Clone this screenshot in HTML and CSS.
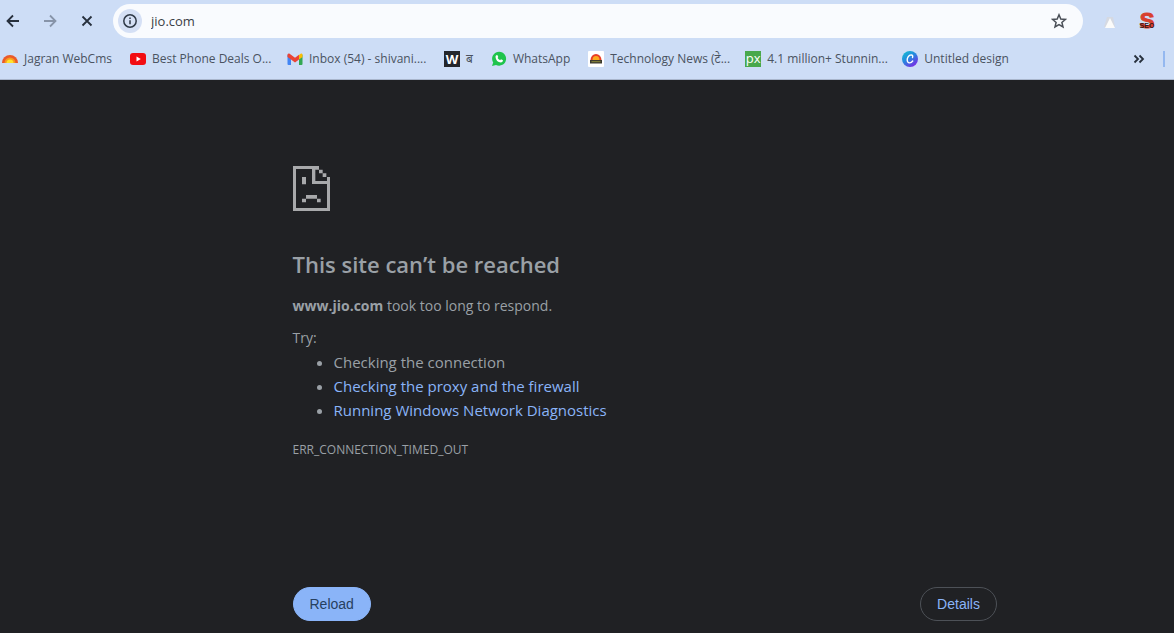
FILE: index.html
```html
<!DOCTYPE html>
<html lang="en">
<head>
    <meta charset="UTF-8">
    <meta name="viewport" content="width=device-width, initial-scale=1.0">
    <title>jio.com</title>
    <link rel="stylesheet" href="styles.css">
</head>
<body>
    <header class="browser">
        <!-- Navigation buttons, address bar and extensions -->
        <div class="toolbar">
            <div class="nav-buttons">
                <button type="button" class="icon-button" aria-label="Back">
                    <svg width="14" height="14" viewBox="0 0 14 14"><path d="M13 7H2M7 1.500L1.500 7L7 12.500" class="line"/></svg>
                </button>
                <button type="button" class="icon-button disabled" aria-label="Forward">
                    <svg width="14" height="14" viewBox="0 0 14 14"><path d="M1 7h11M7 1.500L12.500 7L7 12.500" class="line"/></svg>
                </button>
                <button type="button" class="icon-button" aria-label="Stop loading">
                    <svg width="14" height="14" viewBox="0 0 14 14"><path d="M2.500 2.500l9 9M11.500 2.500l-9 9" class="line"/></svg>
                </button>
            </div>
            <div class="address-bar">
                <button type="button" class="site-info" aria-label="View site information">
                    <svg width="16" height="16" viewBox="0 0 16 16"><circle cx="8" cy="8" r="6.200" class="thin"/><path d="M8 7.300v4M8 4.500v1.600" class="thin"/></svg>
                </button>
                <input type="text" class="url" value="jio.com" aria-label="Address">
                <button type="button" class="icon-button star" aria-label="Bookmark this tab">
                    <svg width="16" height="16" viewBox="0 0 16 16"><path d="M8 1.800l1.800 4.200 4.600.4-3.500 3 1.100 4.500L8 11.500l-4 2.400 1.100-4.500-3.500-3 4.600-.4z" class="thin"/></svg>
                </button>
            </div>
            <div class="extensions">
                <button type="button" class="icon-button" aria-label="Extension">
                    <svg width="16" height="16" viewBox="0 0 16 16"><path d="M5 4h6l2 10H2z" fill="#d5d9e2"/><path d="M8 5l5 10H3z" fill="#fbfbfa"/></svg>
                </button>
                <button type="button" class="icon-button seo" aria-label="SEO extension">
                    <span class="seo-letter">S</span>
                    <span class="seo-word">SEO</span>
                </button>
            </div>
        </div>

        <!-- Bookmarks -->
        <nav class="bookmarks" aria-label="Bookmarks">
            <a href="#" class="bookmark">
                <svg width="16" height="16" viewBox="0 0 16 16"><path d="M0 12a8 8 0 0 1 16 0z" fill="#ea5a2a"/><path d="M2.500 12a5.500 5.500 0 0 1 11 0z" fill="#f99a1f"/><path d="M4.500 12a3.500 3.500 0 0 1 7 0z" fill="#ffe32e"/></svg>
                <span class="label">Jagran WebCms</span>
            </a>
            <a href="#" class="bookmark">
                <svg width="16" height="16" viewBox="0 0 16 16"><rect y="2" width="16" height="12" rx="3" fill="#f20d12"/><path d="M6.500 5.500v5L10.800 8z" fill="#fff"/></svg>
                <span class="label cut">Best Phone Deals O...</span>
            </a>
            <a href="#" class="bookmark">
                <svg width="16" height="16" viewBox="0 0 16 16"><path d="M.5 3.500L4 6v8H1.500a1 1 0 0 1-1-1z" fill="#4285f4"/><path d="M15.500 3.500L12 6v8h2.500a1 1 0 0 0 1-1z" fill="#34a853"/><path d="M12 4l2-1.500q1.500-.5 1.500 1.500v2L12 8.500z" fill="#fbbc04"/><path d="M.5 4Q.5 2 2.300 2.500L8 6.800l4-3v4.700l-4 3-4-3L.5 6z" fill="#ea4335"/></svg>
                <span class="label cut">Inbox (54) - shivani....</span>
            </a>
            <a href="#" class="bookmark">
                <span class="tile dark">W</span>
                <span class="label">ब</span>
            </a>
            <a href="#" class="bookmark">
                <svg width="16" height="16" viewBox="0 0 16 16"><path d="M1 15l1.200-3.500A7 7 0 1 1 5 14z" fill="#1fc44c"/><path d="M5.300 4.200l1-.2 1 2-.7 1q.9 1.500 2.500 2.200l.9-.9 2 1q0 2-2 2.200Q5 11 4.500 6q0-1.200.8-1.800z" fill="#fff"/></svg>
                <span class="label">WhatsApp</span>
            </a>
            <a href="#" class="bookmark">
                <svg width="16" height="16" viewBox="0 0 16 16"><rect width="16" height="16" rx="1" fill="#fff"/><path d="M2.500 9a5.500 6 0 0 1 11 0z" fill="#e83c26"/><path d="M4.500 9a3.500 4 0 0 1 7 0z" fill="#fba81c"/><path d="M2 9h12v3.500H2z" fill="#3c3a2f"/><path d="M3.500 10.700h9" stroke="#8d8a3a"/></svg>
                <span class="label cut">Technology News (टे...</span>
            </a>
            <a href="#" class="bookmark">
                <span class="tile green">px</span>
                <span class="label cut">4.1 million+ Stunnin...</span>
            </a>
            <a href="#" class="bookmark">
                <svg width="16" height="16" viewBox="0 0 16 16">
                    <defs><linearGradient id="canva" x1="0" y1="0" x2=".7" y2="1"><stop offset="0" stop-color="#10c5cf"/><stop offset=".5" stop-color="#2688df"/><stop offset="1" stop-color="#7a2be5"/></linearGradient></defs>
                    <circle cx="8" cy="8" r="8" fill="url(#canva)"/>
                    <path d="M10.500 6.500q.8-2.500-1.300-2.600C6.500 4 5 7 5.200 9.200c.3 3.400 3.700 3.400 5.500.8" fill="none" stroke="#fff" stroke-width="1.400" stroke-linecap="round"/>
                </svg>
                <span class="label">Untitled design</span>
            </a>
            <button type="button" class="icon-button more" aria-label="More bookmarks">
                <svg width="12" height="12" viewBox="0 0 12 12"><path d="M1.500 2.500L5 6L1.500 9.500M6.500 2.500L10 6L6.500 9.500" class="line"/></svg>
            </button>
            <span class="divider"></span>
        </nav>
    </header>

    <!-- Error page -->
    <main class="error-page">
        <svg class="sad-page" width="37" height="45" viewBox="0 0 111 135">
            <path d="M0 0h78v11h11v11h11v11h11v102H0zM9 9v117h93V54H57V9zM67 9v36h35V33H89V22H78V11H67z" fill-rule="evenodd"/>
            <path d="M27 33h12v22H27zM39 87h33v11H39zM27 98h12v11H27zM72 98h11v11H72z"/>
        </svg>
        <h1>This site can’t be reached</h1>
        <p class="summary"><strong>www.jio.com</strong> took too long to respond.</p>
        <div class="suggestions">
            <p>Try:</p>
            <ul>
                <li>Checking the connection</li>
                <li><a href="#">Checking the proxy and the firewall</a></li>
                <li><a href="#">Running Windows Network Diagnostics</a></li>
            </ul>
        </div>
        <p class="error-code">ERR_CONNECTION_TIMED_OUT</p>
        <div class="actions">
            <button type="button" class="reload">Reload</button>
            <button type="button" class="details">Details</button>
        </div>
    </main>
</body>
</html>
```
FILE: styles.css
```css
* {
    box-sizing: border-box;
}

body {
    margin: 0;
    min-height: 100vh;
    display: flex;
    flex-direction: column;
    font-family: "Segoe UI", "Open Sans", "Noto Sans", sans-serif;
    background: #202124;
    color: #9aa0a6;
}

button {
    font: inherit;
    cursor: pointer;
}

h1, p, ul {
    margin: 0;
}

.browser {
    background: #cdddf6;
    border-bottom: 1px solid #a9b6cc;
    color: #3f4854;
}

.toolbar {
    display: flex;
    align-items: center;
    padding: 4px 18px 0 6px;
}

.nav-buttons {
    display: flex;
    gap: 23px;
    width: 107px;
}

.icon-button {
    display: flex;
    align-items: center;
    justify-content: center;
    padding: 0;
    border: none;
    background: none;
    color: #27303d;
}

.disabled {
    color: #8794a9;
}

.line {
    fill: none;
    stroke: currentColor;
    stroke-width: 1.8;
}

.thin {
    fill: none;
    stroke: currentColor;
    stroke-width: 1.5;
}

.address-bar {
    flex: 1;
    display: flex;
    align-items: center;
    height: 34px;
    padding: 0 16px 0 5px;
    background: #f9fbfe;
    border-radius: 17px;
}

.site-info {
    display: flex;
    align-items: center;
    justify-content: center;
    width: 24px;
    height: 24px;
    padding: 0;
    border: none;
    border-radius: 50%;
    background: #d5e0f5;
    color: #2f3947;
}

.url {
    flex: 1;
    padding: 0 9px;
    border: none;
    outline: none;
    background: none;
    font: inherit;
    font-size: 13px;
    color: #3a3f46;
}

.star {
    color: #4a4f57;
}

.extensions {
    display: flex;
    gap: 20px;
    padding-left: 19px;
}

.seo {
    flex-direction: column;
    width: 18px;
    height: 18px;
    font-family: "Liberation Sans", Arial, sans-serif;
    font-weight: bold;
}

.seo-letter {
    font-size: 22px;
    line-height: 18px;
    color: #d8402f;
    -webkit-text-stroke: 1px #d8402f;
}

.seo-word {
    margin-top: -8px;
    font-size: 7px;
    line-height: 8px;
    color: #3a1715;
}

.bookmarks {
    display: flex;
    align-items: center;
    gap: 18px;
    height: 41px;
    padding: 0 9px 0 2px;
}

.bookmark {
    display: flex;
    align-items: center;
    gap: 6px;
    color: #4a5361;
    font-size: 12px;
    line-height: 16px;
    white-space: nowrap;
    text-decoration: none;
}

.cut {
    width: 117px;
}

.tile {
    width: 16px;
    height: 16px;
    font-size: 13px;
    font-weight: bold;
    line-height: 16px;
    text-align: center;
    color: #fff;
}

.dark {
    background: #24262b;
}

.green {
    background: #48a84c;
    font-weight: normal;
    line-height: 14px;
}

.more {
    margin-left: auto;
}

.divider {
    width: 2px;
    height: 16px;
    background: #94b8f0;
}

.error-page {
    flex: 1;
    display: flex;
    flex-direction: column;
    width: 60%;
    margin-left: calc(25% - 1px);
    padding: 86px 0 12px;
    font-size: 14px;
    line-height: 24px;
}

.sad-page {
    fill: #a8a9ab;
}

h1 {
    margin-top: 36px;
    font-size: 22px;
    font-weight: 600;
    line-height: 34px;
}

.summary {
    margin-top: 13px;
}

.suggestions {
    margin-top: 8px;
}

ul {
    padding-left: 41px;
    font-size: 15px;
}

li a {
    color: #8ab4f8;
    text-decoration: none;
}

.error-code {
    margin-top: 16px;
    font-size: 12px;
}

.actions {
    display: flex;
    justify-content: space-between;
    margin-top: auto;
}

.reload, .details {
    height: 34px;
    padding: 0 16px;
    border: 1px solid #8ab4f8;
    border-radius: 17px;
    background: #8ab4f8;
    font-family: "Liberation Sans", Arial, sans-serif;
    font-size: 14px;
    color: #27405f;
}

.details {
    border-color: #4d5157;
    background: none;
    color: #8ab4f8;
}
```
